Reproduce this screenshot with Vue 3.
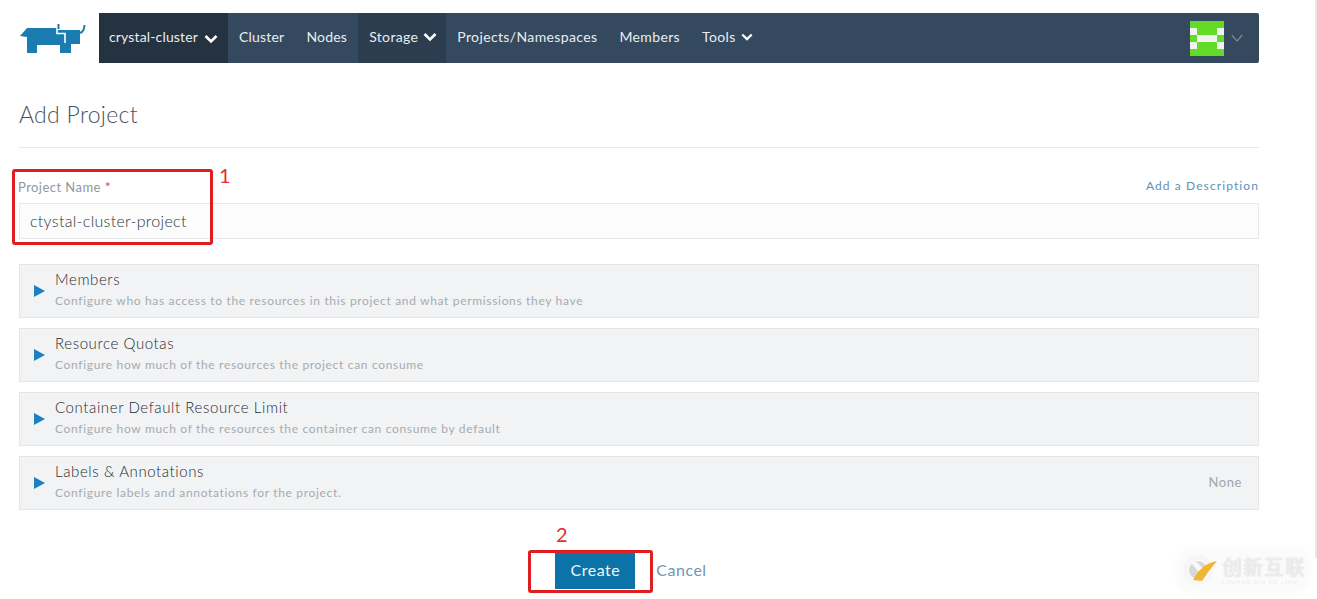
<script setup>
const sections = [
  { title: 'Members', desc: 'Configure who has access to the resources in this project and what permissions they have' },
  { title: 'Resource Quotas', desc: 'Configure how much of the resources the project can consume' },
  { title: 'Container Default Resource Limit', desc: 'Configure how much of the resources the container can consume by default' },
  { title: 'Labels & Annotations', desc: 'Configure labels and annotations for the project.', status: 'None' },
]
</script>

<template>
  <div class="page">
    <header class="top">
      <svg class="logo" viewBox="0 0 68 30" width="68" height="30">
        <path fill="#1a7cb0" d="M1 13 L8 5 H38 V7 H61 V21 H52 V30 H41 V22 H18 V30 H8 V14 Z" />
        <path fill="none" stroke="#fff" stroke-width="1.6" d="M38 4 V10.500 H46 V20" />
        <path fill="none" stroke="#1a7cb0" stroke-width="2" d="M39.500 6 V1 M60 10 Q65 10 65.500 2" />
      </svg>
      <nav class="bar">
        <a class="item cluster">crystal-cluster<svg class="chev" viewBox="0 0 14 10"><path d="M1.500 2l5.500 5.500 5.500-5.500" /></svg></a>
        <a class="item light">Cluster</a>
        <a class="item light">Nodes</a>
        <a class="item dark">Storage<svg class="chev" viewBox="0 0 14 10"><path d="M1.500 2l5.500 5.500 5.500-5.500" /></svg></a>
        <a class="item plain">Projects/Namespaces</a>
        <a class="item plain">Members</a>
        <a class="item plain">Tools<svg class="chev small" viewBox="0 0 14 10"><path d="M1.500 2l5.500 5.500 5.500-5.500" /></svg></a>
        <div class="spacer"></div>
        <svg class="avatar" viewBox="0 0 5 5" width="34" height="35" preserveAspectRatio="none" shape-rendering="crispEdges">
          <rect width="5" height="5" fill="#62dc26" />
          <path fill="#f2f2f2" d="M0 1h1v1H0zM4 1h1v1H4zM1 2h3v1H1zM0 3h1v1H0zM4 3h1v1H4z" />
        </svg>
        <svg class="user-chev" viewBox="0 0 14 10"><path d="M1 1l6 7 6-7" /></svg>
      </nav>
    </header>

    <main class="content">
      <h1 class="title">Add Project</h1>

      <div class="labels">
        <label class="label">Project Name <span class="req">*</span></label>
        <a class="add-desc">Add a Description</a>
      </div>
      <div class="input">ctystal-cluster-project</div>

      <section v-for="s in sections" :key="s.title" class="panel">
        <span class="arrow"></span>
        <div class="panel-text">
          <div class="panel-title">{{ s.title }}</div>
          <div class="panel-desc">{{ s.desc }}</div>
        </div>
        <span v-if="s.status" class="status">{{ s.status }}</span>
      </section>

      <div class="actions">
        <button class="create">Create</button>
        <a class="cancel">Cancel</a>
      </div>
    </main>

    <div class="mark box1"></div>
    <div class="num n1">1</div>
    <div class="mark box2"></div>
    <div class="num n2">2</div>

    <div class="scroll-edge"></div>

    <div class="watermark">
      <svg viewBox="0 0 36 36" width="36" height="36">
        <circle cx="17" cy="18" r="12.500" fill="none" stroke="#f6f6f6" stroke-width="5" />
        <circle cx="17" cy="18" r="9" fill="#d8d8d8" />
        <path d="M9 10l16 18h7L16 10z" fill="#f8f8f8" />
        <path d="M12 28 Q20 12 36 9 Q28 18 21 29z" fill="#f2b632" />
      </svg>
      <div class="wm-col">
        <span class="wm-text">创新互联</span>
        <span class="wm-sub">CHUANG XIN HU LIAN</span>
      </div>
    </div>
  </div>
</template>

<style scoped>
.page {
  position: relative;
  width: 1317px;
  height: 599px;
  overflow: hidden;
  background: #fff;
  font-family: Lato, "Noto Sans CJK SC", sans-serif;
  color: #4a5560;
}
.top {
  display: flex;
  align-items: center;
  width: 1240px;
  height: 50px;
  margin: 13px 0 0 19px;
}
.logo { flex: none; margin-right: 12px; }
.bar {
  flex: 1;
  display: flex;
  align-items: stretch;
  height: 50px;
  background: #34495e;
  border-radius: 0 2px 2px 0;
}
.item {
  display: flex;
  align-items: center;
  box-sizing: border-box;
  padding-bottom: 3px;
  font-size: 14px;
  letter-spacing: 0.2px;
  color: #e9edf1;
  white-space: nowrap;
}
.cluster {
  width: 129px;
  padding-left: 10px;
  letter-spacing: 0.15px;
  background: #25323f;
}
.light { background: #34495e; padding-left: 11px; padding-right: 11px; }
.dark { background: #2c3d50; padding-left: 11px; padding-right: 9px; letter-spacing: 0.35px; }
.plain { padding-left: 11px; padding-right: 11px; letter-spacing: 0.37px; }
.chev {
  width: 14px;
  height: 10px;
  margin-left: 5px;
  fill: none;
  stroke: #fff;
  stroke-width: 2.600;
}
.cluster .chev { margin-left: 6px; margin-top: 5px; }
.chev.small { width: 12px; margin-left: 5px; }
.spacer { flex: 1; }
.avatar { align-self: center; }
.user-chev {
  align-self: center;
  width: 12px;
  height: 9px;
  margin: 0 16px 0 7px;
  fill: none;
  stroke: #8a9aaa;
  stroke-width: 1.2;
}
.content {
  width: 1240px;
  margin-left: 19px;
}
.title {
  margin: 0;
  padding: 36px 0 17px;
  height: 31px;
  line-height: 31px;
  font-size: 23px;
  font-weight: 300;
  letter-spacing: 0.3px;
  color: #47525d;
  border-bottom: 1px solid #e7e9ec;
}
.labels {
  display: flex;
  justify-content: space-between;
  align-items: flex-start;
  height: 18px;
  margin-top: 30px;
}
.label {
  margin-left: -1px;
  font-size: 13px;
  line-height: 18px;
  letter-spacing: 0.45px;
  color: #8e979f;
}
.req { color: #d9534f; font-size: 14px; }
.add-desc {
  font-size: 12px;
  line-height: 16px;
  letter-spacing: 1.1px;
  color: #5f91b4;
}
.input {
  display: flex;
  align-items: center;
  box-sizing: border-box;
  height: 36px;
  margin-top: 7px;
  padding: 0 0 2px 10px;
  border: 1px solid #e8e9ea;
  background: #fcfcfc;
  font-size: 16px;
  font-weight: 300;
  letter-spacing: 0.3px;
  color: #2f363c;
}
.panel {
  display: flex;
  align-items: center;
  box-sizing: border-box;
  height: 54px;
  margin-top: 10px;
  padding: 0 16px 0 14px;
  border: 1px solid #e3e5e7;
  background: #f2f3f4;
}
.input + .panel { margin-top: 25px; }
.arrow {
  width: 0;
  height: 0;
  margin-right: 10px;
  border-left: 11px solid #1f82c0;
  border-top: 6px solid transparent;
  border-bottom: 6px solid transparent;
}
.panel-text { flex: 1; padding-bottom: 5px; }
.panel-title {
  font-size: 15px;
  font-weight: 300;
  line-height: 19px;
  letter-spacing: 0.6px;
  color: #262c32;
}
.panel-desc {
  margin-top: 4px;
  font-size: 12px;
  line-height: 15px;
  letter-spacing: 0.67px;
  color: #a6abb0;
}
.status {
  padding-bottom: 3px;
  font-size: 13px;
  letter-spacing: 0.6px;
  color: #a0a6ac;
}
.actions {
  display: flex;
  align-items: center;
  justify-content: center;
  gap: 21px;
  height: 37px;
  margin-top: 42px;
  padding-right: 16px;
}
.create {
  width: 80px;
  height: 37px;
  border: 0;
  padding: 0 0 2px;
  background: #0b73a8;
  color: #f2f7fa;
  font-family: inherit;
  font-size: 16px;
  letter-spacing: 0.5px;
}
.cancel {
  padding-bottom: 2px;
  font-size: 16px;
  letter-spacing: 0.5px;
  color: #6f97b2;
}
.mark {
  position: absolute;
  box-sizing: border-box;
  border: 3px solid #df1f1f;
  border-radius: 3px;
}
.box1 { left: 12px; top: 169px; width: 201px; height: 76px; }
.box2 { left: 528px; top: 550px; width: 125px; height: 43px; }
.num {
  position: absolute;
  color: #e0312c;
  font-size: 20px;
  line-height: 24px;
}
.n1 { left: 219px; top: 163px; }
.n2 { left: 556px; top: 522px; }
.scroll-edge {
  position: absolute;
  left: 1315px;
  top: 0;
  height: 558px;
  width: 2px;
  background: #e6e6e6;
}
.watermark {
  position: absolute;
  left: 1181px;
  top: 552px;
  display: flex;
  align-items: center;
  gap: 5px;
  border-radius: 10px;
  background: rgba(0, 0, 0, 0.015);
  box-shadow: 0 0 10px 4px rgba(0, 0, 0, 0.025);
}
.wm-col {
  display: flex;
  flex-direction: column;
  align-items: stretch;
}
.wm-text {
  font-size: 20px;
  line-height: 24px;
  letter-spacing: 1px;
  color: #ececec;
  text-shadow: 0 0 2px #d8d8d8;
}
.wm-sub {
  font-size: 5px;
  line-height: 6px;
  letter-spacing: 1.300px;
  white-space: nowrap;
  color: #ebebeb;
}
</style>
